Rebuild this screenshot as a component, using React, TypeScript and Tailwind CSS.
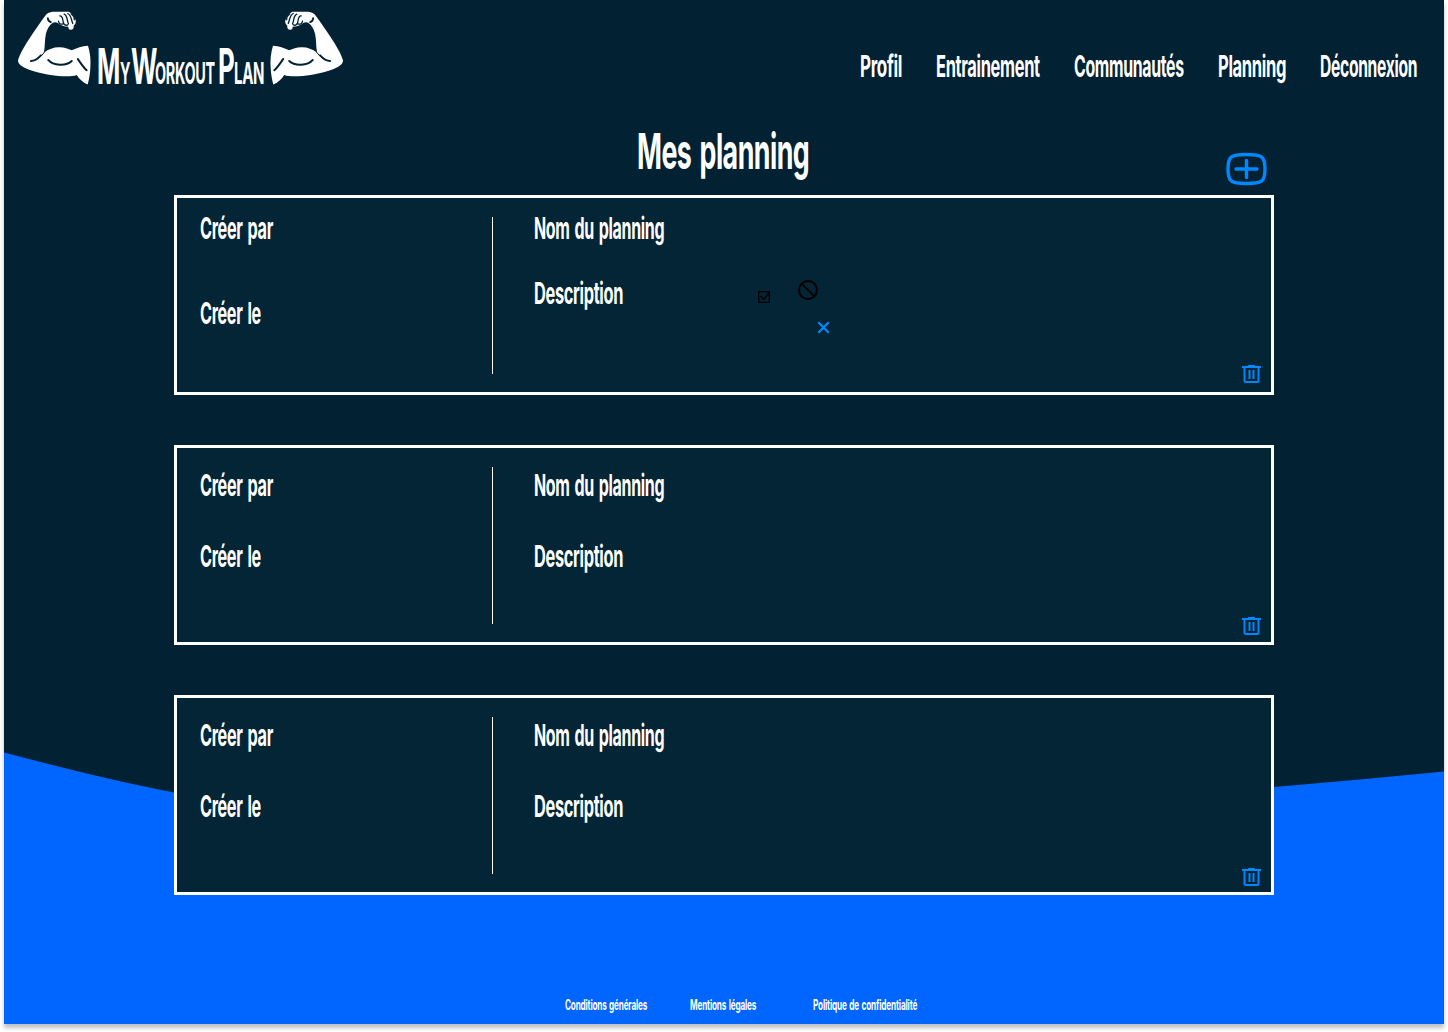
import { useLayoutEffect, useRef } from "react";

type LabelProps = { text: string; width: number; className?: string };

/* Condensed lettering: sets the text in a fixed width by squeezing it horizontally. */
function Label({ text, width, className = "" }: LabelProps) {
  const ref = useRef<HTMLSpanElement>(null);
  useLayoutEffect(() => {
    const fit = () => {
      const el = ref.current;
      if (el) el.style.transform = `scaleX(${width / el.offsetWidth})`;
    };
    fit();
    document.fonts?.ready.then(fit);
  }, [text, width]);
  return (
    <span className={`flex shrink-0 leading-none ${className}`} style={{ width }}>
      <span
        ref={ref}
        className="inline-block shrink-0 origin-left whitespace-nowrap tracking-[-0.02em] [word-spacing:0.09em]"
      >
        {text}
      </span>
    </span>
  );
}

function Arm({ className = "" }: { className?: string }) {
  return (
    <svg viewBox="54 34 220 222" className={`h-[74px] w-[73px] shrink-0 ${className}`} fill="none">
      <path
        fill="#fff"
        d="M54 182C60 161 75 137 92 111C108 87 122 66 135 49C141 40 149 37 158 36L207 36C217 40 224 51 228 62C229 68 227 74 222 77C223 84 220 90 213 90C207 90 205 85 206 81C195 81 181 77 174 70C169 67 163 66 158 70C148 77 142 89 138 103C134 120 136 140 132 159C147 148 164 142 180 143C194 143 205 149 216 152C231 146 247 138 265 138C271 157 274 181 272 205C271 224 268 240 264 255C251 249 240 240 231 226C213 233 178 230 152 226C118 221 76 210 62 197C57 193 54 188 54 182Z"
      />
      <g stroke="#022233" strokeLinecap="round" strokeLinejoin="round">
        <path strokeWidth="6" d="M93 184C103 184 114 177 123 167M145 181C160 199 200 200 216 184M234 178C243 190 250 203 261 212" />
        <path strokeWidth="5.500" d="M144 55C144 61 148 65 153 67" />
        <path strokeWidth="3" d="M133 158L125 168" />
        <path strokeWidth="4" d="M176 64C177 72 184 76 191 71M180 48C190 47 188 60 191 70C194 76 200 78 204 75M193 43C204 47 201 62 206 72M204 41C215 46 214 60 219 71M214 42C221 47 224 54 224 60" />
      </g>
    </svg>
  );
}

function Trash() {
  return (
    <svg viewBox="-.5 0 20 19" className="h-[19px] w-5" fill="none" stroke="#0088ff" strokeWidth="2">
      <path d="M.5 2H19.500M6.500 1H13.500M3 2V15.500Q3 17 4.500 17H15.500Q17 17 17 15.500V2M8 5V14M12 5V14" />
    </svg>
  );
}

function AddIcon() {
  return (
    <svg viewBox="-.5 0 42 34" className="h-[34px] w-[42px]" fill="none" stroke="#0088ff" strokeWidth="3.400" strokeLinecap="round">
      <path d="M2.500 17C2.500 4.500 5 2.500 21 2.500S39.500 4.500 39.500 17S37 31.500 21 31.500S2.500 29.500 2.500 17ZM10.500 17H31.500M21 8.500V25.500" />
    </svg>
  );
}

function StrayIcons() {
  return (
    <svg viewBox="757 279 74 56" className="absolute left-[580px] top-[81px] h-14 w-[74px]" fill="none">
      <g stroke="#000">
        <path strokeWidth="1.300" d="M758.700 291.700H769.300V302.300H758.700ZM760.500 296L763.800 299.500L769 292.500" />
        <circle cx="808" cy="290" r="9" strokeWidth="2" />
        <path strokeWidth="2" d="M801.600 283.600L814.400 296.400" />
      </g>
      <path stroke="#0088ff" strokeWidth="2.200" d="M818.300 322.300L828.700 332.700M828.700 322.300L818.300 332.700" />
    </svg>
  );
}

const cards = [
  { pad: "pt-[15px]", left: "gap-[55px]", right: "gap-[35px]", trash: "pb-[8px]", stray: true },
  { pad: "pt-[22px]", left: "gap-[41px]", right: "gap-[41px]", trash: "pb-[6px]", stray: false },
  { pad: "pt-[22px]", left: "gap-[41px]", right: "gap-[41px]", trash: "pb-[5px]", stray: false },
];

export default function App() {
  return (
    <div className="h-[1032px] w-[1448px] overflow-hidden bg-white px-1 font-['Inter',sans-serif] font-bold text-white">
      <div className="relative isolate flex h-[1024px] w-[1440px] flex-col bg-[#022233] shadow-[0_4px_4px_rgba(0,0,0,0.25)]">
        <svg viewBox="0 0 1440 274" className="absolute bottom-0 left-0 -z-10 h-[274px] w-[1440px]">
          <path fill="#0066ff" d="M0 2.500C57 17.500 115 32 170 42.500C500 105 850 71 1270 37C1328 32 1384 27 1440 21.500V274H0Z" />
        </svg>

        <header className="flex h-[100px] justify-between pl-[14px] pr-[27px]">
          <div className="flex pt-[11px]">
            <Arm />
            <div className="flex h-[80px] items-baseline pl-[6px] pt-[30px]">
              <Label text="M" width={23} className="text-[50px]" />
              <Label text="Y" width={10} className="text-[30px]" />
              <Label text="W" width={26} className="ml-[1px] text-[50px]" />
              <Label text="ORKOUT" width={60} className="-ml-[2px] text-[30px]" />
              <Label text="P" width={16} className="ml-[3px] text-[50px]" />
              <Label text="LAN" width={30} className="text-[30px]" />
            </div>
            <Arm className="ml-[6px] -scale-x-100" />
          </div>
          <nav className="flex gap-[34px] pt-[51px] text-[30px]">
            <Label text="Profil" width={42} />
            <Label text="Entrainement" width={104} />
            <Label text="Communautés" width={110} />
            <Label text="Planning" width={68} />
            <Label text="Déconnexion" width={97} />
          </nav>
        </header>

        <div className="flex h-[95px] pl-[633px] pt-[26px]">
          <Label text="Mes planning" width={172} className="text-[50px]" />
          <button className="ml-[416px] mt-[26px] h-[34px]" aria-label="Ajouter">
            <AddIcon />
          </button>
        </div>

        <main className="flex flex-col gap-[50px] px-[170px]">
          {cards.map((c, i) => (
            <section key={i} className="relative flex h-[200px] border-[3px] border-white bg-[#032535] text-[30px]">
              <div className={`flex w-[315px] flex-col pl-[23px] ${c.pad} ${c.left}`}>
                <Label text="Créer par" width={73} />
                <Label text="Créer le" width={61} />
              </div>
              <div className="mt-[19px] h-[157px] w-px bg-white" />
              <div className={`flex grow flex-col pl-[41px] ${c.pad} ${c.right}`}>
                <Label text="Nom du planning" width={130} />
                <Label text="Description" width={89} />
              </div>
              {c.stray && <StrayIcons />}
              <button className={`self-end pr-[10px] ${c.trash}`} aria-label="Supprimer">
                <Trash />
              </button>
            </section>
          ))}
        </main>

        <footer className="mt-[103px] flex pl-[561px] text-[14px]">
          <Label text="Conditions générales" width={82} />
          <Label text="Mentions légales" width={66} className="ml-[43px]" />
          <Label text="Politique de confidentialité" width={104} className="ml-[57px]" />
        </footer>
      </div>
    </div>
  );
}
